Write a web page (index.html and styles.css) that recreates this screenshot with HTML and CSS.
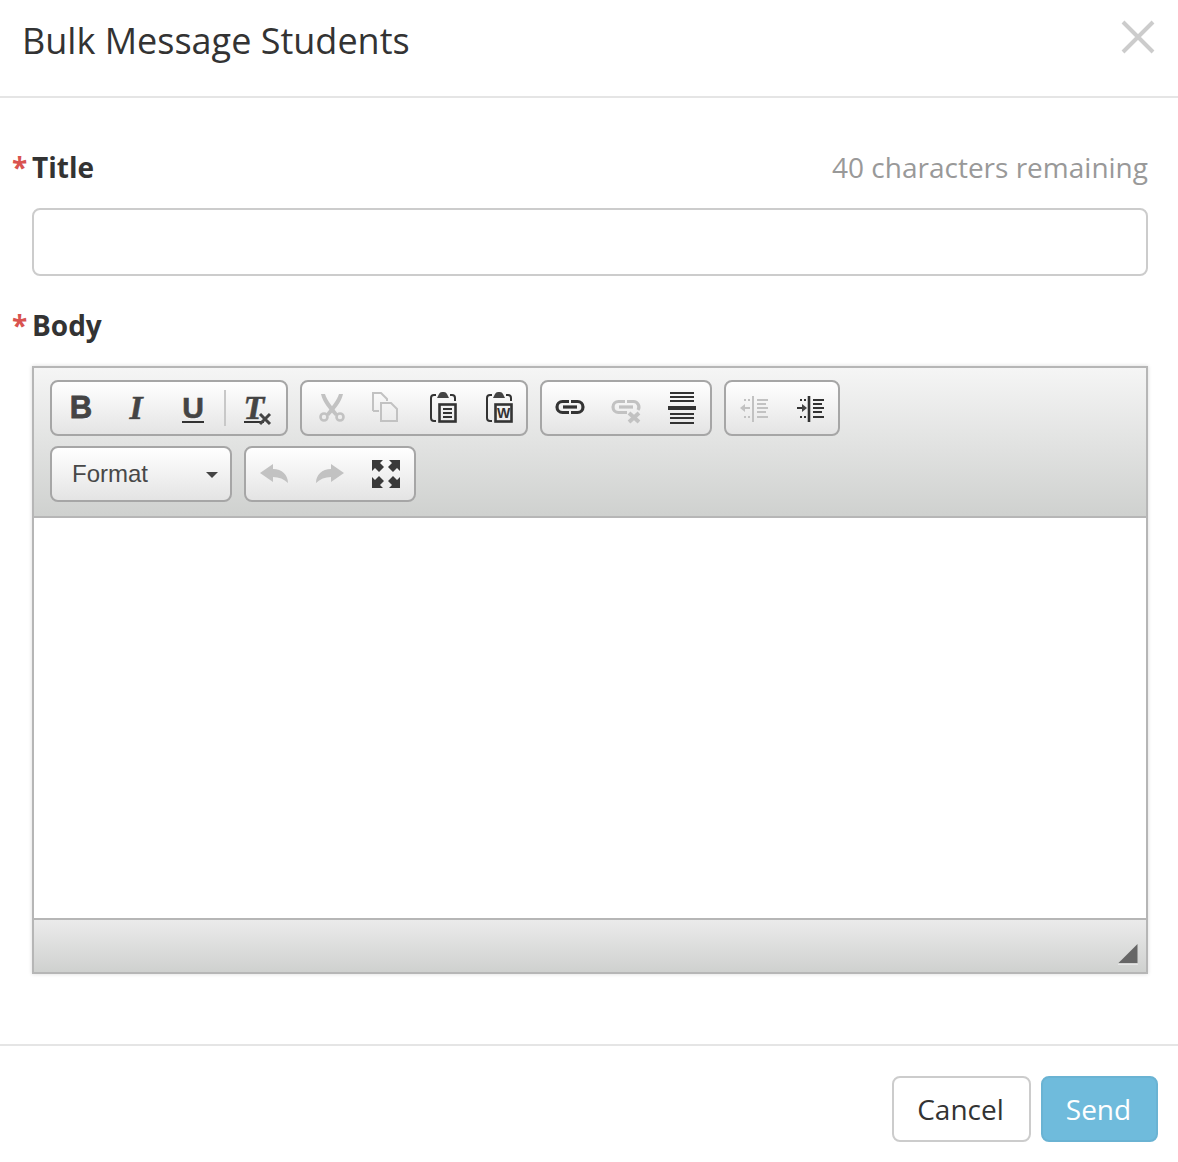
FILE: index.html
```html
<!DOCTYPE html>
<html lang="en">
<head>
  <meta charset="UTF-8" />
  <meta name="viewport" content="width=device-width, initial-scale=1.0"/>
  <title>Bulk Message Students</title>
  <link rel="stylesheet" href="styles.css">
</head>
<body>
  <div class="modal">
    <div class="modal-header">
      <h1>Bulk Message Students</h1>
      <svg class="close" width="34" height="34" viewBox="0 0 34 34"><path d="M2 2 L32 32 M32 2 L2 32"/></svg>
    </div>

    <div class="modal-body">
      <div class="label-row">
        <label><span class="req">*</span>Title</label>
        <span class="remaining">40 characters remaining</span>
      </div>
      <input class="title-input" type="text">

      <div class="label-row body-label">
        <label><span class="req">*</span>Body</label>
      </div>

      <div class="editor">
        <div class="toolbar">
          <div class="toolbar-row">
            <div class="group">
              <span class="btn"><span class="glyph bold">B</span></span>
              <span class="btn"><span class="glyph slanted">I</span></span>
              <span class="btn"><span class="glyph under">U</span></span>
              <span class="sep"></span>
              <span class="btn">
                <span class="glyph slanted clear">T</span>
                <svg class="clear-x" width="14" height="14" viewBox="0 0 14 14"><path d="M2 2 L12 12 M12 2 L2 12"/></svg>
              </span>
            </div>
            <div class="group">
              <span class="btn">
                <svg class="icon off" width="32" height="32" viewBox="0 0 32 32">
                  <path class="fill" d="M7 2 L11 2 C13 9 19 15 24 22 L21 24 C15 17 9 11 7 2 Z"/>
                  <path class="fill" d="M29 2 L25 2 C23 9 17 15 12 22 L15 24 C21 17 27 11 29 2 Z"/>
                  <circle class="line thick" cx="10" cy="25" r="3.5"/>
                  <circle class="line thick" cx="26" cy="25" r="3.5"/>
                </svg>
              </span>
              <span class="btn">
                <svg class="icon off" width="32" height="32" viewBox="0 0 32 32">
                  <path class="line" d="M3 19 V1 H11 L17 7 V9 M3 19 H9"/>
                  <path class="line" d="M11 11 H21 L27 17 V29 H11 Z"/>
                </svg>
              </span>
              <span class="btn">
                <svg class="icon" width="32" height="32" viewBox="0 0 32 32">
                  <path class="line" d="M10 3 H8 Q5 3 5 6 V26 Q5 29 8 29 H10 M24 3 H26 Q29 3 29 6 V9"/>
                  <path class="fill" d="M11 6 L13 2 Q14 0 16 0 H18 Q20 0 21 2 L23 6 Z"/>
                  <rect class="line thick" x="13.5" y="12.5" width="16" height="17"/>
                  <path class="line" d="M17 17 H26 M17 21 H26 M17 25 H26"/>
                </svg>
              </span>
              <span class="btn">
                <svg class="icon" width="32" height="32" viewBox="0 0 32 32">
                  <path class="line" d="M10 3 H8 Q5 3 5 6 V26 Q5 29 8 29 H10 M24 3 H26 Q29 3 29 6 V9"/>
                  <path class="fill" d="M11 6 L13 2 Q14 0 16 0 H18 Q20 0 21 2 L23 6 Z"/>
                  <rect class="line thick" x="13.5" y="12.5" width="16" height="17"/>
                  <text class="word" x="21.5" y="26" text-anchor="middle">W</text>
                </svg>
              </span>
            </div>
            <div class="group">
              <span class="btn">
                <svg class="icon" width="32" height="32" viewBox="0 0 32 32">
                  <path class="line link" d="M15 9.5 H8.5 A5.5 5.5 0 0 0 8.5 20.5 H15 M17 9.5 H23.5 A5.5 5.5 0 0 1 23.5 20.5 H17"/>
                  <path class="line link" d="M9 15 H23"/>
                </svg>
              </span>
              <span class="btn">
                <svg class="icon off" width="32" height="32" viewBox="0 0 32 32">
                  <path class="line link" d="M15 9.5 H8.5 A5.5 5.5 0 0 0 8.5 20.5 H17 M17 9.5 H23.5 A5.5 5.5 0 0 1 28 18"/>
                  <path class="line link" d="M9 15 H23"/>
                  <path class="line thicker" d="M19 21 L29 30 M29 21 L19 30"/>
                </svg>
              </span>
              <span class="btn">
                <svg class="icon" width="32" height="32" viewBox="0 0 32 32">
                  <path class="line" d="M4 1 H28 M4 5 H28 M4 9 H28 M4 22 H28 M4 26 H28 M4 31 H28"/>
                  <path class="line thicker" d="M2 16 H30"/>
                </svg>
              </span>
            </div>
            <div class="group">
              <span class="btn">
                <svg class="icon off" width="32" height="32" viewBox="0 0 32 32">
                  <path class="line" d="M15 4 V30 M19 8 H30 M19 12 H28 M19 16 H30 M19 20 H28 M19 25 H30"/>
                  <path class="line" d="M5 16 H12"/>
                  <path class="fill" d="M2 16 L7 12 V20 Z"/>
                  <path class="line" d="M6 8 H8 M10 8 H12 M6 25 H8 M10 25 H12"/>
                </svg>
              </span>
              <span class="btn">
                <svg class="icon" width="32" height="32" viewBox="0 0 32 32">
                  <path class="line" d="M19 8 H30 M19 12 H28 M19 16 H30 M19 20 H28 M19 25 H30"/>
                  <path class="line thick" d="M15 4 V30"/>
                  <path class="line" d="M3 16 H9"/>
                  <path class="fill" d="M13 16 L8 12 V20 Z"/>
                  <path class="line" d="M6 8 H8 M10 8 H12 M6 25 H8 M10 25 H12"/>
                </svg>
              </span>
            </div>
          </div>
          <div class="toolbar-row">
            <div class="group combo">
              <span>Format</span>
              <span class="caret"></span>
            </div>
            <div class="group">
              <span class="btn">
                <svg class="icon off" width="32" height="32" viewBox="0 0 32 32">
                  <path class="fill" d="M2 15 L15 6 V11 C24 11 30 17 30 25 C26 21 21 19 15 19 V24 Z"/>
                </svg>
              </span>
              <span class="btn">
                <svg class="icon off" width="32" height="32" viewBox="0 0 32 32">
                  <path class="fill" d="M30 15 L17 6 V11 C8 11 2 17 2 25 C6 21 11 19 17 19 V24 Z"/>
                </svg>
              </span>
              <span class="btn">
                <svg class="icon" width="32" height="32" viewBox="0 0 32 32">
                  <path class="dark" d="M2 2 H13 L10 5 L14 9 L9 14 L5 10 L2 13 Z"/>
                  <path class="dark" d="M30 2 H19 L22 5 L18 9 L23 14 L27 10 L30 13 Z"/>
                  <path class="dark" d="M2 30 H13 L10 27 L14 23 L9 18 L5 22 L2 19 Z"/>
                  <path class="dark" d="M30 30 H19 L22 27 L18 23 L23 18 L27 22 L30 19 Z"/>
                </svg>
              </span>
            </div>
          </div>
        </div>
        <div class="editor-content"></div>
        <div class="statusbar">
          <svg width="20" height="21" viewBox="0 0 20 21"><path class="grip" d="M0 20 L20 0 V20 Z"/></svg>
        </div>
      </div>
    </div>

    <div class="modal-footer">
      <button class="cancel">Cancel</button>
      <button class="send">Send</button>
    </div>
  </div>
</body>
</html>
```

FILE: styles.css
```css
* {
  box-sizing: border-box;
}
body {
  margin: 0;
  font-family: "Open Sans", sans-serif;
  background: #fff;
  color: #333;
}
.modal {
  width: 1178px;
  height: 1162px;
  overflow: hidden;
}
.modal-header {
  height: 98px;
  border-bottom: 2px solid #e5e5e5;
  display: flex;
  justify-content: space-between;
  padding: 0 23px 0 22px;
}
h1 {
  margin: 0;
  font-size: 36px;
  font-weight: 400;
  line-height: 82px;
}
.close {
  margin-top: 20px;
}
.close path {
  fill: none;
  stroke: #ccc;
  stroke-width: 4;
}
.modal-body {
  padding: 49px 30px 0 32px;
}
.label-row {
  display: flex;
  justify-content: space-between;
  line-height: 40px;
  font-size: 28px;
}
label {
  font-weight: 700;
}
.req {
  display: inline-block;
  width: 20px;
  margin-left: -20px;
  color: #d9534f;
}
.remaining {
  color: #999;
}
.title-input {
  display: block;
  width: 100%;
  height: 68px;
  margin-top: 21px;
  border: 2px solid #ccc;
  border-radius: 8px;
  background: #fff;
}
.body-label {
  margin-top: 29px;
}
.editor {
  margin-top: 21px;
  border: 2px solid #b6b6b6;
  box-shadow: 0 0 4px rgba(0, 0, 0, 0.15);
}
.toolbar {
  height: 150px;
  padding: 12px 16px 0;
  border-bottom: 2px solid #b6b6b6;
  background: linear-gradient(#f5f5f5, #cfd1cf);
  display: flex;
  flex-direction: column;
  gap: 10px;
}
.toolbar-row {
  display: flex;
  gap: 12px;
}
.group {
  height: 56px;
  display: flex;
  align-items: center;
  border: 2px solid #a6a6a6;
  border-radius: 8px;
  background: linear-gradient(#fff, #e4e4e4);
}
.btn {
  position: relative;
  width: 56px;
  height: 52px;
  display: flex;
  align-items: center;
  justify-content: center;
}
.sep {
  width: 2px;
  height: 36px;
  margin: 0 4px;
  background: #c8c8c8;
}
.glyph {
  color: #444;
  line-height: 1;
  text-shadow: 0 1px 0 #fff;
}
.bold {
  font: 700 31px "Liberation Sans", sans-serif;
  -webkit-text-stroke: 0.8px #444;
  margin-left: 2px;
}
.slanted {
  font: italic 700 34px "Liberation Serif", serif;
  -webkit-text-stroke: 0.5px #444;
}
.under {
  font: 700 30px "Liberation Sans", sans-serif;
  -webkit-text-stroke: 0.6px #444;
  border-bottom: 2px solid #333;
  line-height: 27px;
  margin-left: 2px;
}
.clear {
  border-bottom: 2px solid #333;
  line-height: 27px;
  margin-right: 8px;
}
.clear-x {
  position: absolute;
  left: 28px;
  top: 30px;
}
.clear-x path {
  fill: none;
  stroke: #444;
  stroke-width: 3;
}
.icon .line {
  fill: none;
  stroke: #333;
  stroke-width: 2;
}
.icon .thick {
  stroke-width: 2.6;
}
.icon .link {
  stroke-width: 3.2;
}
.icon .thicker {
  stroke-width: 4;
}
.icon .fill {
  fill: #444;
}
.icon .dark {
  fill: #3a3a3a;
}
.icon .word {
  font: 700 14px "Liberation Sans", sans-serif;
  fill: #333;
}
.icon.off .line {
  stroke: #c2c2c2;
}
.icon.off .fill {
  fill: #c2c2c2;
}
.combo {
  width: 182px;
  padding: 0 12px 0 20px;
  justify-content: space-between;
  font: 24px "Liberation Sans", sans-serif;
  color: #484848;
}
.caret {
  margin-top: 2px;
  border-top: 6px solid #444;
  border-left: 6px solid transparent;
  border-right: 6px solid transparent;
}
.editor-content {
  height: 400px;
  background: #fff;
}
.statusbar {
  height: 54px;
  padding: 0 8px 7px 0;
  border-top: 2px solid #b6b6b6;
  background: linear-gradient(#ebebeb, #cfd1cf);
  display: flex;
  justify-content: flex-end;
  align-items: flex-end;
}
.statusbar svg {
  display: block;
  border-bottom: 1px solid #e6e6e6;
}
.grip {
  fill: #666;
}
.modal-footer {
  margin-top: 70px;
  height: 118px;
  border-top: 2px solid #e5e5e5;
  padding: 30px 20px 0 0;
  display: flex;
  justify-content: flex-end;
  align-items: flex-start;
  gap: 10px;
}
button {
  height: 66px;
  font: 28px "Open Sans", sans-serif;
  border-radius: 8px;
}
.cancel {
  width: 139px;
  padding: 0 2px 0 0;
  background: #fff;
  border: 2px solid #ccc;
  color: #333;
}
.send {
  width: 117px;
  padding: 0 2px 0 0;
  background: #6fbbdc;
  border: 2px solid #6ab3d3;
  color: #fff;
}
```
